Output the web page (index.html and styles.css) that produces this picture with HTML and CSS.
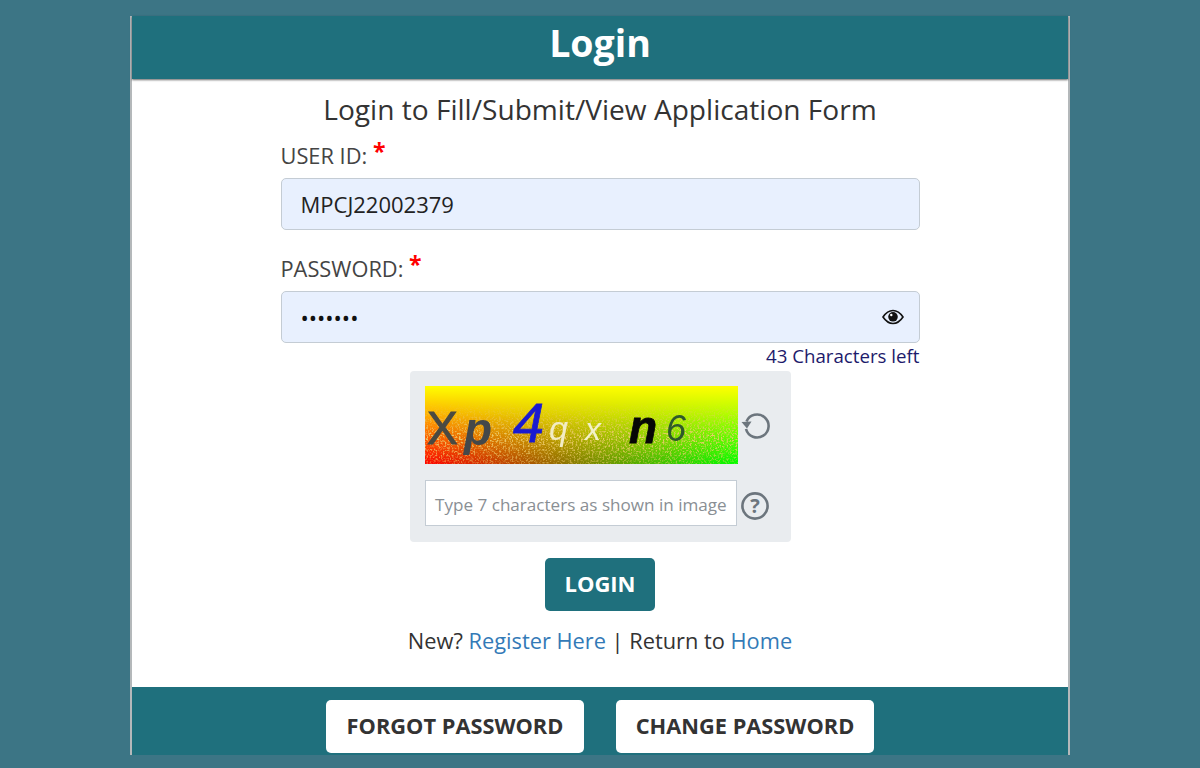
FILE: index.html
```html
<!DOCTYPE html>
<html lang="en">
<head>
    <meta charset="UTF-8">
    <title>Login</title>
    <link rel="stylesheet" href="styles.css">
</head>
<body>
    <div class="panel">
        <div class="panel-head">Login</div>
        <div class="panel-body">
            <h2>Login to Fill/Submit/View Application Form</h2>
            <div class="form">
                <label class="label label-user">USER ID: <span class="req">*</span></label>
                <div class="field">MPCJ22002379</div>
                <label class="label label-pass">PASSWORD: <span class="req">*</span></label>
                <div class="field field-pass">
                    <span class="dots">&bull;&bull;&bull;&bull;&bull;&bull;&bull;</span>
                    <svg class="eye" width="22" height="16" viewBox="0 0 22 16">
                        <path d="M1 8C4 3.500 7.300 1.500 11 1.500S18 3.500 21 8c-3 4.500-6.300 6.500-10 6.500S4 12.500 1 8z" fill="none" stroke="#111" stroke-width="1.600"/>
                        <circle cx="11" cy="7.800" r="4.800" fill="#111"/>
                        <circle cx="9.300" cy="6" r="1.200" fill="#fff"/>
                    </svg>
                </div>
                <div class="chars-left">43 Characters left</div>
            </div>

            <div class="captcha-box">
                <div class="captcha-row">
                    <div class="captcha-img">
                        <svg class="noise" width="313" height="78">
                            <filter id="grain">
                                <feTurbulence type="fractalNoise" baseFrequency="0.55" numOctaves="2" seed="4"/>
                                <feColorMatrix values="0 0 0 0 0.85  0 0 0 0 0.6  0 0 0 0 0.15  4 0 0 0 -1.9"/>
                            </filter>
                            <rect width="313" height="78" filter="url(#grain)"/>
                        </svg>
                        <span class="c c1">X</span>
                        <span class="c c2">p</span>
                        <span class="c c3">4</span>
                        <span class="c c4">q</span>
                        <span class="c c5">x</span>
                        <span class="c c6">n</span>
                        <span class="c c7">6</span>
                    </div>
                    <svg class="side-icon refresh-icon" width="32" height="32" viewBox="0 0 32 32">
                        <path d="M6.500 12.500A11.500 11.500 0 1 1 6 20" fill="none" stroke="#6c757d" stroke-width="2.600"/>
                        <path d="M1.500 13l5.500 6.500 4.500-7z" fill="#6c757d"/>
                    </svg>
                </div>
                <div class="captcha-row captcha-row-input">
                    <div class="captcha-input">Type 7 characters as shown in image</div>
                    <svg class="side-icon help-icon" width="30" height="30" viewBox="0 0 30 30">
                        <circle cx="15" cy="15" r="12.600" fill="none" stroke="#6c757d" stroke-width="2.600"/>
                        <text x="15" y="22" text-anchor="middle" class="help-mark">?</text>
                    </svg>
                </div>
            </div>

            <a class="btn-login" href="#">LOGIN</a>
            <p class="links">New? <a href="#">Register Here</a> | Return to <a href="#">Home</a></p>
        </div>
        <div class="panel-foot">
            <a class="btn-white" href="#">FORGOT PASSWORD</a>
            <a class="btn-white" href="#">CHANGE PASSWORD</a>
        </div>
    </div>
</body>
</html>
```

FILE: styles.css
```css
* {
    margin: 0;
    padding: 0;
    box-sizing: border-box;
}

body {
    font-family: 'Open Sans', sans-serif;
    background-color: #3c7585;
    color: #333;
    height: 768px;
    overflow: hidden;
    padding-top: 16px;
}

a {
    text-decoration: none;
}

.panel {
    width: 940px;
    height: 739px;
    margin: 0 auto;
    border-left: 2px solid #b4b8ba;
    border-right: 2px solid #b4b8ba;
    background-color: #fff;
    display: flex;
    flex-direction: column;
}

.panel-head {
    height: 63px;
    background-color: #1f707d;
    color: #fff;
    font-size: 37.5px;
    font-weight: 700;
    line-height: 54px;
    text-align: center;
    box-shadow: 0 1px 2px rgba(0, 0, 0, 0.6);
}

.panel-body {
    flex: 1;
    display: flex;
    flex-direction: column;
    align-items: center;
}

h2 {
    font-size: 28.1px;
    font-weight: 400;
    line-height: 36px;
    margin-top: 12px;
    margin-bottom: 1px;
    color: #333;
}

.form {
    width: 639px;
}

.label {
    display: block;
    height: 28px;
    font-size: 21.8px;
    line-height: 28px;
    color: #444;
}

.label-user {
    margin-top: 14px;
    margin-bottom: 8px;
}

.label-pass {
    margin-top: 25px;
    margin-bottom: 8px;
}

.req {
    color: #f00;
    font-size: 23px;
    font-weight: 700;
    line-height: 0;
    vertical-align: 4px;
}

.field {
    height: 52px;
    background-color: #e8f0fe;
    border: 1px solid #c4ccd4;
    border-radius: 5px;
    padding: 0 19px;
    font-size: 22px;
    line-height: 50px;
    color: #222;
    display: flex;
    align-items: center;
    justify-content: space-between;
}

.field-pass {
    padding-right: 15px;
}

.dots {
    font-size: 22px;
    line-height: 48px;
    color: #111;
}

.chars-left {
    text-align: right;
    font-size: 18.7px;
    line-height: 26px;
    color: #1d1a6b;
}

.captcha-box {
    width: 381px;
    height: 171px;
    margin-top: 2px;
    margin-left: 1px;
    background-color: #e9ecef;
    border-radius: 4px;
    padding: 15px 0 0 15px;
}

.captcha-row {
    display: flex;
    align-items: center;
    gap: 3px;
}

.captcha-row-input {
    margin-top: 16px;
}

.captcha-img {
    position: relative;
    width: 313px;
    height: 78px;
    overflow: hidden;
    background:
        linear-gradient(to bottom, #ff0 0%, rgba(255, 255, 0, 0.7) 35%, rgba(255, 255, 0, 0) 100%),
        linear-gradient(to right, #f00 0%, #00ff00 100%);
}

.noise {
    position: absolute;
    top: 0;
    left: 0;
    -webkit-mask-image: linear-gradient(to bottom, transparent 20%, #000 65%, rgba(0, 0, 0, 0.5) 100%);
    mask-image: linear-gradient(to bottom, transparent 20%, #000 65%, rgba(0, 0, 0, 0.5) 100%);
}

.c {
    position: absolute;
    font-family: 'Liberation Sans', sans-serif;
    line-height: 1;
    filter: blur(0.4px);
}

.c1 { left: 2px; top: 19px; font-size: 46px; color: #4a4a42; -webkit-text-stroke: 1px #4a4a42; }
.c2 { left: 39px; top: 20px; font-size: 46px; font-weight: 700; font-style: italic; color: #44484a; }
.c3 { left: 88px; top: 9px; font-size: 56px; font-style: italic; color: #1a1ad0; -webkit-text-stroke: 0.8px #1a1ad0; }
.c4 { left: 124px; top: 25px; font-size: 34px; font-style: italic; color: #f2ecc4; }
.c5 { left: 160px; top: 27px; font-size: 32px; font-style: italic; color: #f2f2c8; }
.c6 { left: 204px; top: 18px; font-size: 46px; font-weight: 700; font-style: italic; color: #060606; -webkit-text-stroke: 0.8px #060606; }
.c7 { left: 241px; top: 25px; font-size: 36px; font-style: italic; color: #2f5a2a; }

.side-icon {
    flex: none;
}

.refresh-icon {
    margin-left: -1px;
}

.help-icon {
    margin-top: 6px;
}

.help-mark {
    font-family: 'Open Sans', sans-serif;
    font-size: 20px;
    font-weight: 700;
    fill: #6c757d;
}

.captcha-input {
    width: 312px;
    height: 46px;
    background-color: #fff;
    border: 1px solid #c4ccd4;
    padding-left: 9px;
    font-size: 17.1px;
    line-height: 47px;
    color: #8a8f94;
    white-space: nowrap;
}

.btn-login {
    margin-top: 16px;
    width: 110px;
    height: 53px;
    background-color: #1f707d;
    color: #fff;
    border-radius: 5px;
    font-size: 22px;
    font-weight: 700;
    line-height: 50px;
    text-align: center;
}

.links {
    margin-top: 14px;
    font-size: 21.8px;
    line-height: 32px;
    color: #333;
}

.links a {
    color: #337ab7;
}

.panel-foot {
    height: 68px;
    background-color: #1f707d;
    display: flex;
    justify-content: center;
    gap: 32px;
    padding-top: 13px;
}

.btn-white {
    width: 258px;
    height: 53px;
    background-color: #fff;
    color: #333;
    border-radius: 5px;
    font-size: 21.8px;
    font-weight: 700;
    line-height: 52px;
    text-align: center;
}
```
